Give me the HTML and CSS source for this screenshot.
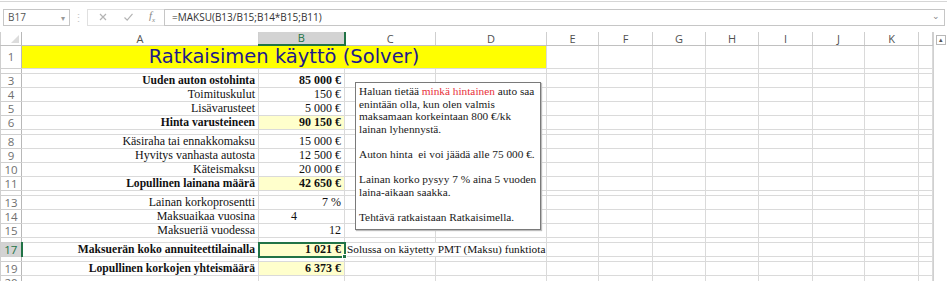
FILE: index.html
```html
<!DOCTYPE html>
<html>
<head>
<meta charset="UTF-8">
<title>Ratkaisimen käyttö</title>
<link rel="stylesheet" href="styles.css">
</head>
<body>
    <div class="ribbon-edge"></div>
    <div class="formula-bar">
        <div class="name-box">B17<span class="caret">&#9662;</span></div>
        <div class="grip">&#8942;</div>
        <div class="fx-buttons">
            <svg width="10" height="10" viewBox="0 0 10 10"><path d="M2 2 L8 8 M8 2 L2 8" stroke="#b4b4b4" stroke-width="1.2"/></svg>
            <svg width="11" height="10" viewBox="0 0 11 10"><path d="M1.5 5.5 L4.2 8.2 L9.5 1.8" stroke="#b4b4b4" stroke-width="1.2" fill="none"/></svg>
            <span class="fx">f<sub>x</sub></span>
        </div>
        <div class="formula">=MAKSU(B13/B15;B14*B15;B11)<span class="expand">&#8964;</span></div>
    </div>

    <div class="sheet">
        <table class="grid">
            <colgroup>
                <col style="width:21px"><col style="width:237px"><col style="width:86px"><col style="width:91px">
                <col style="width:111px"><col style="width:52px"><col style="width:54px"><col style="width:53px">
                <col style="width:53px"><col style="width:54px"><col style="width:52px"><col style="width:54px">
                <col style="width:14px">
            </colgroup>
            <tr class="head">
                <th class="corner"><span class="tri"></span></th><th>A</th><th class="on">B</th><th>C</th><th>D</th>
                <th>E</th><th>F</th><th>G</th><th>H</th><th>I</th><th>J</th><th>K</th><th></th>
            </tr>
            <tr class="r-title">
                <th>1</th><td colspan="4" class="title">Ratkaisimen käyttö (Solver)</td>
                <td></td><td></td><td></td><td></td><td></td><td></td><td></td><td></td>
            </tr>
            <tr class="r-gap"><th></th><td></td><td></td><td></td><td></td><td></td><td></td><td></td><td></td><td></td><td></td><td></td><td></td></tr>
            <tr>
                <th>3</th><td class="lbl b">Uuden auton ostohinta</td><td class="num b">85 000 €</td>
                <td></td><td></td><td></td><td></td><td></td><td></td><td></td><td></td><td></td><td></td>
            </tr>
            <tr>
                <th>4</th><td class="lbl">Toimituskulut</td><td class="num">150 €</td>
                <td></td><td></td><td></td><td></td><td></td><td></td><td></td><td></td><td></td><td></td>
            </tr>
            <tr>
                <th>5</th><td class="lbl">Lisävarusteet</td><td class="num">5 000 €</td>
                <td></td><td></td><td></td><td></td><td></td><td></td><td></td><td></td><td></td><td></td>
            </tr>
            <tr>
                <th>6</th><td class="lbl b">Hinta varusteineen</td><td class="num b hl">90 150 €</td>
                <td></td><td></td><td></td><td></td><td></td><td></td><td></td><td></td><td></td><td></td>
            </tr>
            <tr class="r-gap"><th></th><td></td><td></td><td></td><td></td><td></td><td></td><td></td><td></td><td></td><td></td><td></td><td></td></tr>
            <tr>
                <th>8</th><td class="lbl">Käsiraha tai ennakkomaksu</td><td class="num">15 000 €</td>
                <td></td><td></td><td></td><td></td><td></td><td></td><td></td><td></td><td></td><td></td>
            </tr>
            <tr>
                <th>9</th><td class="lbl">Hyvitys vanhasta autosta</td><td class="num">12 500 €</td>
                <td></td><td></td><td></td><td></td><td></td><td></td><td></td><td></td><td></td><td></td>
            </tr>
            <tr>
                <th>10</th><td class="lbl">Käteismaksu</td><td class="num">20 000 €</td>
                <td></td><td></td><td></td><td></td><td></td><td></td><td></td><td></td><td></td><td></td>
            </tr>
            <tr>
                <th>11</th><td class="lbl b">Lopullinen lainana määrä</td><td class="num b hl">42 650 €</td>
                <td></td><td></td><td></td><td></td><td></td><td></td><td></td><td></td><td></td><td></td>
            </tr>
            <tr class="r-gap"><th></th><td></td><td></td><td></td><td></td><td></td><td></td><td></td><td></td><td></td><td></td><td></td><td></td></tr>
            <tr>
                <th>13</th><td class="lbl">Lainan korkoprosentti</td><td class="num">7 %</td>
                <td></td><td></td><td></td><td></td><td></td><td></td><td></td><td></td><td></td><td></td>
            </tr>
            <tr>
                <th>14</th><td class="lbl">Maksuaikaa vuosina</td><td class="mid">4</td>
                <td></td><td></td><td></td><td></td><td></td><td></td><td></td><td></td><td></td><td></td>
            </tr>
            <tr>
                <th>15</th><td class="lbl">Maksueriä vuodessa</td><td class="num">12</td>
                <td></td><td></td><td></td><td></td><td></td><td></td><td></td><td></td><td></td><td></td>
            </tr>
            <tr class="r-gap"><th></th><td></td><td></td><td></td><td></td><td></td><td></td><td></td><td></td><td></td><td></td><td></td><td></td></tr>
            <tr>
                <th class="on">17</th><td class="lbl b">Maksuerän koko annuiteettilainalla</td>
                <td class="num b hl sel">1 021 €<span class="handle"></span></td>
                <td colspan="2" class="note">Solussa on käytetty PMT (Maksu) funktiota</td>
                <td></td><td></td><td></td><td></td><td></td><td></td><td></td><td></td>
            </tr>
            <tr class="r-gap"><th></th><td></td><td></td><td></td><td></td><td></td><td></td><td></td><td></td><td></td><td></td><td></td><td></td></tr>
            <tr>
                <th>19</th><td class="lbl b">Lopullinen korkojen yhteismäärä</td><td class="num b hl">6 373 €</td>
                <td></td><td></td><td></td><td></td><td></td><td></td><td></td><td></td><td></td><td></td>
            </tr>
            <tr>
                <th>20</th><td></td><td></td><td></td><td></td><td></td><td></td><td></td><td></td><td></td><td></td><td></td><td></td>
            </tr>
        </table>

        <div class="textbox">
            <p>Haluan tietää <span class="red">minkä hintainen</span> auto saa<br>enintään olla, kun olen valmis<br>maksamaan korkeintaan 800 €/kk<br>lainan lyhennystä.</p>
            <p>Auton hinta&nbsp; ei voi jäädä alle 75 000 €.</p>
            <p>Lainan korko pysyy 7 % aina 5 vuoden<br>laina-aikaan saakka.</p>
            <p>Tehtävä ratkaistaan Ratkaisimella.</p>
        </div>

        <div class="scrollbar">
            <div class="arrow">&#9652;</div>
        </div>
    </div>
</body>
</html>
```

FILE: styles.css
```css
body {
    margin: 0;
    background: #ffffff;
    font-family: "Open Sans", "Liberation Sans", sans-serif;
    overflow: hidden;
}

.ribbon-edge {
    height: 1px;
    margin-top: 1px;
    background: #d6d6d6;
}

/* formula bar */
.formula-bar {
    display: flex;
    align-items: center;
    height: 30px;
    padding: 0 2px 0 3px;
    box-sizing: border-box;
}
.name-box {
    width: 67px;
    height: 17px;
    box-sizing: border-box;
    border: 1px solid #c6c6c6;
    font-size: 10px;
    line-height: 15px;
    padding-left: 4px;
    color: #555;
    display: flex;
    justify-content: space-between;
}
.caret {
    font-size: 8px;
    color: #999;
    padding-right: 4px;
}
.grip {
    width: 17px;
    text-align: center;
    color: #c8c8c8;
    font-size: 11px;
}
.fx-buttons {
    width: 77px;
    height: 17px;
    box-sizing: border-box;
    border: 1px solid #e0e0e0;
    border-right: none;
    display: flex;
    align-items: center;
    gap: 15px;
    padding-left: 10px;
}
.fx {
    font-family: "Liberation Serif", serif;
    font-style: italic;
    font-size: 11px;
    color: #888;
}
.fx sub {
    font-size: 7px;
}
.formula {
    flex: 1;
    height: 17px;
    box-sizing: border-box;
    border: 1px solid #c6c6c6;
    font-size: 10px;
    line-height: 15px;
    padding-left: 7px;
    color: #333;
    display: flex;
    justify-content: space-between;
}
.expand {
    color: #888;
    padding-right: 4px;
    font-size: 9px;
    line-height: 11px;
}

/* sheet */
.sheet {
    position: relative;
    display: flex;
}
.grid {
    border-collapse: collapse;
    table-layout: fixed;
    width: 932px;
}
.grid td, .grid th {
    padding: 0;
    border: 1px solid #dadada;
    height: 13px;
    line-height: 13px;
    overflow: visible;
    white-space: nowrap;
    vertical-align: bottom;
}
.grid th {
    font-weight: normal;
    font-size: 11.5px;
    color: #707070;
    border-color: #cfcfcf;
}
.grid .head th {
    height: 12px;
    line-height: 12px;
    font-size: 11px;
    color: #505050;
    border-top: none;
    border-bottom-color: #c0c0c0;
}
.grid .head th.on {
    background: #d3d3d3;
    color: #217346;
    border-bottom: 2px solid #217346;
}
.grid tr th:first-child {
    text-align: center;
    border-right-color: #b8b8b8;
}
.grid tr th.on {
    background: #d3d3d3;
    color: #217346;
    border-right: 2px solid #217346;
}
.corner {
    position: relative;
}
.tri {
    position: absolute;
    right: 2px;
    bottom: 2px;
    border-left: 8px solid transparent;
    border-bottom: 8px solid #dcdcdc;
}

.grid .r-title td, .grid .r-title th {
    height: 22px;
    line-height: 22px;
}
.grid .r-gap td, .grid .r-gap th {
    height: 4px;
    line-height: 4px;
    font-size: 0;
}

.grid .title {
    background: #ffff00;
    text-align: center;
    font-family: "DejaVu Sans", Verdana, sans-serif;
    font-size: 19.5px;
    color: #1e1a8c;
    line-height: 22px;
}

.grid .lbl, .grid .num, .grid .mid, .grid .note {
    font-family: "Liberation Serif", serif;
    font-size: 12px;
    color: #111;
}
.grid .lbl {
    text-align: right;
    padding-right: 3px;
}
.grid .lbl.b {
    font-size: 11.6px;
}
.grid .num {
    text-align: right;
    padding-right: 3px;
}
.grid .mid {
    text-align: left;
    padding-left: 32px;
}
.grid .note {
    padding-left: 2px;
    font-size: 11.3px;
}
.b {
    font-weight: bold;
}
.hl {
    background: #ffffcc;
}
.sel {
    position: relative;
    outline: 2px solid #217346;
    outline-offset: -1px;
}
.handle {
    position: absolute;
    right: -3px;
    bottom: -3px;
    width: 5px;
    height: 5px;
    background: #217346;
    border: 1px solid #fff;
    box-sizing: border-box;
}

/* text box floating over the sheet */
.textbox {
    position: absolute;
    left: 355px;
    top: 50px;
    width: 186px;
    height: 148px;
    box-sizing: border-box;
    border: 1px solid #7a7a7a;
    box-shadow: 1px 1px 1px #bdbdbd;
    background: #ffffff;
    padding: 2px 2px 0 3px;
    font-family: "Liberation Serif", serif;
    font-size: 11.3px;
    line-height: 12.6px;
    color: #1a1a1a;
    white-space: nowrap;
}
.textbox p {
    margin: 0 0 12.6px 0;
}
.red {
    color: #e8303a;
}

.scrollbar {
    width: 15px;
    border-left: 1px solid #d0d0d0;
    box-sizing: border-box;
    padding-left: 2px;
}
.arrow {
    width: 10px;
    height: 10px;
    margin-top: 3px;
    border: 1px solid #b8b8b8;
    box-sizing: border-box;
    font-size: 7px;
    line-height: 8px;
    text-align: center;
    color: #555;
}
```
